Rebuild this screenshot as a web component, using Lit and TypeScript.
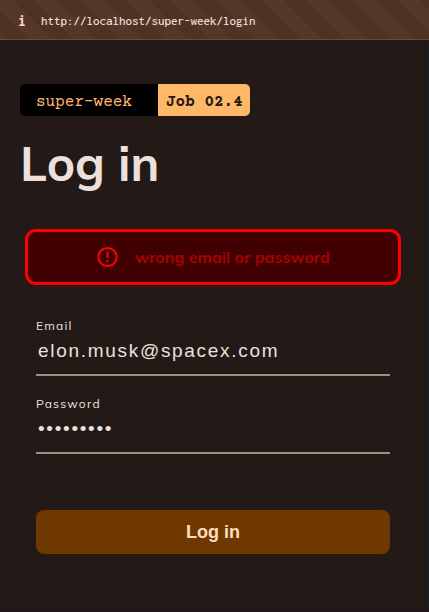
import { LitElement, html, css } from "lit";
import { customElement, property } from "lit/decorators.js";

@customElement("text-field")
class TextField extends LitElement {
  @property() label = "";
  @property() value = "";
  @property() type = "text";
  static styles = css`
    :host { display: block; height: 78px; }
    label { display: block; height: 18px; font: 400 12px/18px Mulish, Lato, sans-serif; letter-spacing: 1.2px; color: #ede0dc; }
    input { display: block; box-sizing: border-box; width: 100%; height: 41px; margin: 0; padding: 0 2px 7px; border: 0; border-bottom: 2px solid #a08d80; border-radius: 0; outline: 0; background: transparent; color: #ede0dc; font: 400 19px/32px "Liberation Sans", sans-serif; letter-spacing: 1.7px; }
  `;
  render() {
    return html`<label for="field">${this.label}</label>
      <input id="field" type=${this.type} .value=${this.value} />`;
  }
}

@customElement("app-root")
class AppRoot extends LitElement {
  static styles = css`
    :host { display: block; }
    .page { box-sizing: border-box; height: 612px; overflow: hidden; background: #231a17; border-bottom: 4px solid #20151a; }
    .address { box-sizing: border-box; height: 40px; padding: 2px 0 0 18px; display: flex; align-items: center; border-bottom: 1px solid #70482f; background: repeating-linear-gradient(45deg, #553729 0 4.3px, #503223 4.3px 20.3px, #553729 20.3px 32px); color: #ede0dc; font: 500 13px/20px Inconsolata, "DejaVu Sans Mono", monospace; }
    .info { width: 23px; font-weight: 700; font-size: 16px; color: #ffdbcb; }
    .body { box-sizing: border-box; height: 568px; padding: 44px 0 0 20px; border-right: 2px solid #1c1e1f; }
    .badge { display: flex; width: 230px; height: 32px; border-radius: 5px; overflow: hidden; font: 16px/36px "Courier Prime", Courier, "Liberation Mono", monospace; }
    .project { width: 138px; box-sizing: border-box; padding-left: 16px; background: #000; color: #ffb868; }
    .job { flex: 1; padding-left: 8px; background: #ffb868; color: #231a17; font-weight: 700; }
    h1 { margin: 17px 0 0; height: 60px; font: 700 48px/60px Mulish, Lato, sans-serif; color: #ede0dc; }
    .alert { box-sizing: border-box; width: 376px; height: 56px; margin: 36px 0 0 5px; padding-left: 69px; display: flex; align-items: center; border: 3px solid #f00; border-radius: 11px; background: #410002; color: #a90000; font: 700 16px/24px Mulish, Lato, sans-serif; }
    .alert svg { width: 22px; height: 22px; margin-right: 16.5px; margin-left: -0.5px; }
    form { width: 354px; margin: 32px 0 0 16px; }
    button { display: block; width: 354px; height: 44px; margin-top: 37px; padding: 0; border: 0; border-radius: 8px; background: #6f3800; color: #ffdcbc; font: 700 18px/44px "Liberation Sans", sans-serif; }
  `;
  render() {
    return html`<div class="page">
      <header class="address"><span class="info">i</span><span class="url">http://localhost/super-week/login</span></header>
      <main class="body">
        <div class="badge"><span class="project">super-week</span><span class="job">Job 02.4</span></div>
        <h1><span class="title">Log in</span></h1>
        <div class="alert" role="alert">
          <svg viewBox="0 0 22 22" fill="none" stroke="#f00" stroke-width="2"><circle cx="10.5" cy="11" r="9.1" /><path d="M10.5 6v6M10.5 14v2" /></svg>
          <span class="message">wrong email or password</span>
        </div>
        <form>
          <text-field label="Email" value="elon.musk@spacex.com"></text-field>
          <text-field label="Password" type="password" value="marsmars1"></text-field>
          <button type="button">Log in</button>
        </form>
      </main>
    </div>`;
  }
}
